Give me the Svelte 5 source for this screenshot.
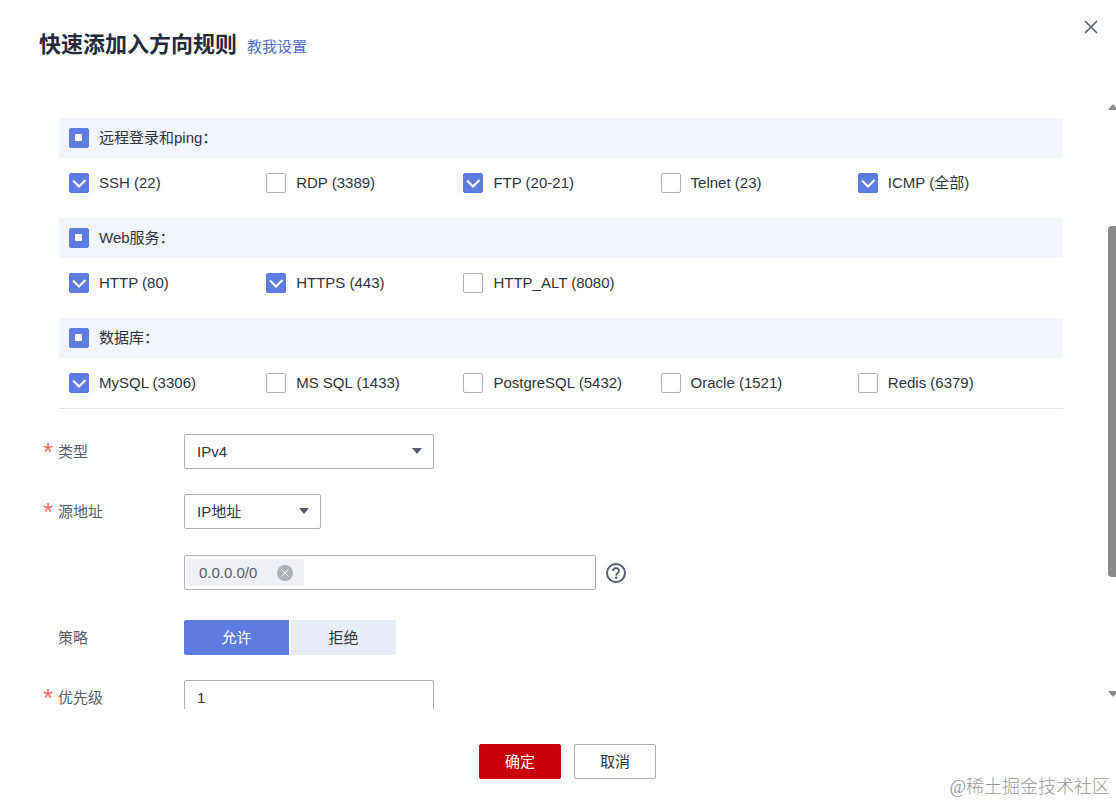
<script lang="ts">
  type Option = { label: string; checked: boolean };
  type Group = { title: string; options: Option[] };

  let groups = $state<Group[]>([
    {
      title: "远程登录和ping：",
      options: [
        { label: "SSH (22)", checked: true },
        { label: "RDP (3389)", checked: false },
        { label: "FTP (20-21)", checked: true },
        { label: "Telnet (23)", checked: false },
        { label: "ICMP (全部)", checked: true },
      ],
    },
    {
      title: "Web服务：",
      options: [
        { label: "HTTP (80)", checked: true },
        { label: "HTTPS (443)", checked: true },
        { label: "HTTP_ALT (8080)", checked: false },
      ],
    },
    {
      title: "数据库：",
      options: [
        { label: "MySQL (3306)", checked: true },
        { label: "MS SQL (1433)", checked: false },
        { label: "PostgreSQL (5432)", checked: false },
        { label: "Oracle (1521)", checked: false },
        { label: "Redis (6379)", checked: false },
      ],
    },
  ]);

  let ipType = $state("IPv4");
  let sourceType = $state("IP地址");
  let sources = $state(["0.0.0.0/0"]);
  let policy = $state("允许");
  let priority = $state("1");

  function allChecked(group: Group) {
    return group.options.every((o) => o.checked);
  }

  function someChecked(group: Group) {
    return group.options.some((o) => o.checked) && !allChecked(group);
  }

  function toggleGroup(group: Group) {
    const next = !allChecked(group);
    for (const option of group.options) option.checked = next;
  }
</script>

{#snippet box(checked: boolean, partial: boolean, onchange: () => void)}
  <span class="box">
    <input type="checkbox" {checked} indeterminate={partial} {onchange} />
    <svg viewBox="0 0 20 20" aria-hidden="true">
      {#if partial}
        <rect x="6" y="6" width="7" height="7" rx="1" fill="#fff" />
      {:else if checked}
        <path d="M4 7.5l6 6 6.5-6.5" fill="none" stroke="#fff" stroke-width="2" />
      {/if}
    </svg>
  </span>
{/snippet}

{#snippet caret()}
  <svg class="caret" viewBox="0 0 10 6" aria-hidden="true">
    <path d="M0 0h10L5 6z" fill="#575d6c" />
  </svg>
{/snippet}

<div class="dialog" role="dialog" aria-labelledby="dialog-title">
  <header>
    <h1 id="dialog-title">快速添加入方向规则</h1>
    <a href="#help">教我设置</a>
    <button class="close" type="button" aria-label="关闭">
      <svg viewBox="0 0 14 14" aria-hidden="true">
        <path d="M1 1l12 12M13 1L1 13" fill="none" stroke="#575d6c" stroke-width="1.6" />
      </svg>
    </button>
  </header>

  <div class="body">
    <div class="content">
      <div class="groups">
        {#each groups as group}
          <section>
            <label class="group-title">
              {@render box(allChecked(group), someChecked(group), () => toggleGroup(group))}
              {group.title}
            </label>
            <div class="options">
              {#each group.options as option}
                <label>
                  {@render box(option.checked, false, () => (option.checked = !option.checked))}
                  {option.label}
                </label>
              {/each}
            </div>
          </section>
        {/each}
      </div>

      <form>
        <div class="row">
          <span class="required">*</span>
          <label for="ip-type">类型</label>
          <div class="select wide">
            <select id="ip-type" bind:value={ipType}>
              <option>IPv4</option>
              <option>IPv6</option>
            </select>
            {@render caret()}
          </div>
        </div>

        <div class="row">
          <span class="required">*</span>
          <label for="source-type">源地址</label>
          <div class="source">
            <div class="select narrow">
              <select id="source-type" bind:value={sourceType}>
                <option>IP地址</option>
                <option>安全组</option>
              </select>
              {@render caret()}
            </div>
            <div class="address">
              <div class="tags">
                {#each sources as source}
                  <span class="tag">
                    {source}
                    <button
                      type="button"
                      aria-label="删除"
                      onclick={() => (sources = sources.filter((s) => s !== source))}
                    >
                      <svg viewBox="0 0 16 16" aria-hidden="true">
                        <circle cx="8" cy="8" r="8" fill="#adb0b8" />
                        <path d="M4.5 4.5l7 7M11.5 4.5l-7 7" stroke="#fff" stroke-width="1" />
                      </svg>
                    </button>
                  </span>
                {/each}
                <input type="text" aria-label="源地址" />
              </div>
              <svg class="help" viewBox="0 0 20 20" aria-hidden="true">
                <circle cx="10" cy="10" r="9" fill="none" stroke="#575d6c" stroke-width="2" />
                <path
                  d="M7 8.2c0-1.9 1.2-3 3-3s3 1.1 3 2.7c0 2-2.9 2.2-2.9 4.6"
                  fill="none"
                  stroke="#575d6c"
                  stroke-width="1.8"
                />
                <circle cx="10.1" cy="14.8" r="1.2" fill="#575d6c" />
              </svg>
            </div>
          </div>
        </div>

        <div class="row">
          <span></span>
          <span class="label">策略</span>
          <div class="segments" role="group" aria-label="策略">
            {#each ["允许", "拒绝"] as item}
              <button
                type="button"
                class:active={policy === item}
                aria-pressed={policy === item}
                onclick={() => (policy = item)}>{item}</button
              >
            {/each}
          </div>
        </div>

        <div class="row">
          <span class="required">*</span>
          <label for="priority">优先级</label>
          <input class="text wide" id="priority" type="text" bind:value={priority} />
        </div>
      </form>
    </div>

    <div class="scrollbar" aria-hidden="true">
      <svg viewBox="0 0 8 6"><path d="M0 6l5-6 5 6z" fill="#8b8b8b" /></svg>
      <div class="track"><div class="thumb"></div></div>
      <svg viewBox="0 0 8 6"><path d="M0 0h10L5 6z" fill="#8b8b8b" /></svg>
    </div>
  </div>

  <footer>
    <button class="primary" type="button">确定</button>
    <button type="button">取消</button>
  </footer>

  <span class="watermark">@稀土掘金技术社区</span>
</div>

<style>
  :global(body) {
    margin: 0;
    background: #fff;
  }

  .dialog {
    position: relative;
    display: flex;
    flex-direction: column;
    height: 100vh;
    box-sizing: border-box;
    color: #2f3440;
    font-family: "Liberation Sans", "Noto Sans CJK SC", sans-serif;
    font-size: 15px;
    line-height: 20px;
  }

  button,
  input,
  select {
    box-sizing: border-box;
    margin: 0;
    color: inherit;
    font: inherit;
  }

  button {
    cursor: pointer;
  }

  svg {
    display: block;
  }

  header {
    display: flex;
    align-items: baseline;
    gap: 10px;
    padding: 29px 18px 40px 39px;
  }

  h1 {
    margin: 0;
    color: #252b3a;
    font-size: 22px;
    font-weight: 700;
    line-height: 32px;
  }

  header a {
    color: #526ecc;
    text-decoration: none;
  }

  .close {
    align-self: flex-start;
    width: 14px;
    height: 14px;
    margin: -9px 0 0 auto;
    padding: 0;
    border: none;
    background: none;
  }

  .body {
    display: flex;
    flex: 1;
    min-height: 0;
  }

  .content {
    flex: 1;
    padding: 17px 45px 20px 43px;
    overflow-y: auto;
    scrollbar-width: none;
  }

  .groups {
    display: flex;
    flex-direction: column;
    gap: 10px;
    margin-left: 16px;
    border-bottom: 1px solid #dfe1e6;
  }

  .groups label {
    display: flex;
    align-items: center;
    gap: 10px;
  }

  .group-title {
    height: 40px;
    padding: 0 10px;
    border-radius: 2px;
    background: #f2f5fc;
  }

  .options {
    display: grid;
    grid-template-columns: repeat(5, 1fr);
    padding: 15px 8px 15px 10px;
  }

  .box {
    position: relative;
    width: 20px;
    height: 20px;
  }

  .box input {
    display: block;
    width: 20px;
    height: 20px;
    appearance: none;
    border: 1px solid #adb0b8;
    border-radius: 2px;
    background: #fff;
  }

  .box input:checked,
  .box input:indeterminate {
    border-color: #5e7ce0;
    background: #5e7ce0;
  }

  .box svg {
    position: absolute;
    inset: 0;
    pointer-events: none;
  }

  form {
    display: flex;
    flex-direction: column;
    gap: 25px;
    margin-top: 25px;
  }

  .row {
    display: grid;
    grid-template-columns: 15px 126px 1fr;
    align-items: start;
  }

  .row > label,
  .label {
    color: #575d6c;
    line-height: 35px;
  }

  .required {
    height: 35px;
    color: #f66f6a;
    font-size: 26px;
    line-height: 36px;
  }

  .select {
    position: relative;
  }

  .wide {
    width: 250px;
  }

  .narrow {
    width: 137px;
  }

  select,
  .text {
    height: 35px;
    padding: 0 12px;
    border: 1px solid #adb0b8;
    border-radius: 2px;
    outline: none;
    background: #fff;
  }

  select {
    display: block;
    width: 100%;
    appearance: none;
  }

  .caret {
    position: absolute;
    top: 14px;
    right: 12px;
    width: 10px;
    height: 6px;
    pointer-events: none;
  }

  .source {
    display: flex;
    flex-direction: column;
    gap: 26px;
    padding-bottom: 5px;
  }

  .address {
    display: flex;
    align-items: center;
    gap: 10px;
  }

  .tags {
    display: flex;
    box-sizing: border-box;
    width: 412px;
    height: 35px;
    padding: 3px 2px;
    border: 1px solid #adb0b8;
    border-radius: 2px;
  }

  .tag {
    display: flex;
    align-items: center;
    gap: 20px;
    padding: 0 11px 0 12px;
    border-radius: 2px;
    background: #eef0f5;
    color: #575d6c;
  }

  .tag button {
    width: 16px;
    height: 16px;
    padding: 0;
    border: none;
    background: none;
  }

  .tags input {
    flex: 1;
    min-width: 0;
    border: none;
    outline: none;
    background: none;
  }

  .help {
    width: 20px;
    height: 20px;
  }

  .segments {
    display: flex;
    gap: 2px;
  }

  .segments button {
    width: 105px;
    height: 35px;
    padding: 0;
    border: none;
    background: #e9edfa;
  }

  .segments button:first-child {
    border-radius: 2px 0 0 2px;
  }

  .segments button.active {
    background: #5e7ce0;
    color: #fff;
  }

  .scrollbar {
    display: flex;
    flex-direction: column;
    gap: 6px;
    width: 8px;
    padding: 3px 0 12px;
  }

  .scrollbar svg {
    width: 8px;
    height: 6px;
  }

  .track {
    display: grid;
    flex: 1;
    grid-template-rows: 110fr 351fr 108fr;
  }

  .thumb {
    grid-row: 2;
    border-radius: 4px 0 0 4px;
    background: #8b8b8b;
  }

  footer {
    display: flex;
    justify-content: center;
    gap: 13px;
    padding: 35px 0 24px 19px;
  }

  footer button {
    width: 82px;
    height: 35px;
    padding: 0;
    border: 1px solid #adb0b8;
    border-radius: 2px;
    background: #fff;
  }

  footer .primary {
    border-color: #c7000b;
    background: #c7000b;
    color: #fff;
  }

  .watermark {
    position: absolute;
    right: 6px;
    bottom: 6px;
    color: #999;
    font-family: "Liberation Serif", "Noto Sans CJK SC", serif;
    font-size: 18px;
    font-weight: 300;
  }
</style>
